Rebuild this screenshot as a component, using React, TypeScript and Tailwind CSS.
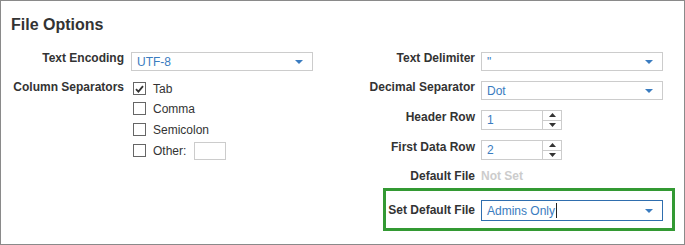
import React from "react";

const Caret = () => (
  <svg width="8" height="4" viewBox="0 0 8 4" className="absolute right-[9px] top-1/2 -translate-y-1/2">
    <path d="M0 0 L8 0 L4 4 Z" fill="#3a7cc0" />
  </svg>
);

function Select({ value, focused = false, h = "h-[19px]", cursor = false }: { value: string; focused?: boolean; h?: string; cursor?: boolean }) {
  return (
    <div
      className={`relative w-[182px] ${h} border ${focused ? "border-[#2f6eae]" : "border-[#cccccc]"} bg-white flex items-center pl-[5px] text-[12px] text-[#3a7cc0]`}
    >
      <span className="leading-[14px]">{value}</span>
      {cursor && <span className="inline-block w-px h-[15px] bg-[#222] ml-[1px]" />}
      <Caret />
    </div>
  );
}

function Spinner({ value }: { value: string }) {
  return (
    <div className="flex w-[81px] h-[20px] border border-[#cccccc] bg-white">
      <div className="flex-1 flex items-center pl-[5px] text-[12px] text-[#3a7cc0] leading-[14px]">{value}</div>
      <div className="w-[19px] border-l border-[#cccccc] flex flex-col">
        <div className="flex-1 flex items-center justify-center border-b border-[#cccccc]">
          <svg width="7" height="4" viewBox="0 0 7 4">
            <path d="M0 4 L7 4 L3.5 0 Z" fill="#333" />
          </svg>
        </div>
        <div className="flex-1 flex items-center justify-center">
          <svg width="7" height="4" viewBox="0 0 7 4">
            <path d="M0 0 L7 0 L3.5 4 Z" fill="#333" />
          </svg>
        </div>
      </div>
    </div>
  );
}

function Check({ checked, label, extra }: { checked?: boolean; label: string; extra?: React.ReactNode }) {
  return (
    <div className="flex items-center h-[13px]">
      <div className="w-[13px] h-[13px] border border-[#666] bg-white flex items-center justify-center">
        {checked && (
          <svg width="9" height="8" viewBox="0 0 9 8">
            <path d="M1 4.2 L3.4 6.6 L8 1.2" stroke="#333" strokeWidth="1.8" fill="none" />
          </svg>
        )}
      </div>
      <span className="ml-[7px] text-[12px] leading-[14px] text-[#333]">{label}</span>
      {extra}
    </div>
  );
}

export default function App() {
  return (
    <div
      className="w-[685px] h-[245px] border border-[#8a8a8a] bg-white text-[#333]"
      style={{ fontFamily: '"Liberation Sans", Arial, sans-serif' }}
    >
      <div className="pl-[10px] pt-[14px] text-[16px] leading-[20px] font-bold text-[#333]">File Options</div>
      <div className="flex mt-[17px]">
        {/* Left column */}
        <div className="w-[341px] flex flex-col">
          <div className="flex">
            <div className="w-[123px] text-right text-[12px] leading-[14px] font-bold -mt-px">Text Encoding</div>
            <div className="ml-[7px]">
              <Select value="UTF-8" />
            </div>
          </div>
          <div className="flex mt-[11px]">
            <div className="w-[123px] text-right text-[12px] leading-[14px] font-bold -mt-[2px]">Column Separators</div>
            <div className="ml-[9px] flex flex-col">
              <Check checked label="Tab" />
              <div className="mt-[7px]">
                <Check label="Comma" />
              </div>
              <div className="mt-[8px]">
                <Check label="Semicolon" />
              </div>
              <div className="mt-[8px]">
                <Check
                  label="Other:"
                  extra={<div className="ml-[8px] w-[32px] h-[18px] border border-[#cccccc] bg-white shrink-0" />}
                />
              </div>
            </div>
          </div>
        </div>
        {/* Right column */}
        <div className="flex flex-col">
          <div className="flex">
            <div className="w-[133px] text-right text-[12px] leading-[14px] font-bold -mt-px">Text Delimiter</div>
            <div className="ml-[6px]">
              <Select value={'"'} />
            </div>
          </div>
          <div className="flex mt-[10px]">
            <div className="w-[133px] text-right text-[12px] leading-[14px] font-bold -mt-px">Decimal Separator</div>
            <div className="ml-[6px]">
              <Select value="Dot" />
            </div>
          </div>
          <div className="flex mt-[10px]">
            <div className="w-[133px] text-right text-[12px] leading-[14px] font-bold">Header Row</div>
            <div className="ml-[6px]">
              <Spinner value="1" />
            </div>
          </div>
          <div className="flex mt-[10px]">
            <div className="w-[133px] text-right text-[12px] leading-[14px] font-bold">First Data Row</div>
            <div className="ml-[6px]">
              <Spinner value="2" />
            </div>
          </div>
          <div className="flex mt-[9px]">
            <div className="w-[133px] text-right text-[12px] leading-[14px] font-bold">Default File</div>
            <div className="ml-[6px] text-[12px] leading-[14px] font-bold text-[#cccccc]">Not Set</div>
          </div>
          <div className="ml-[41px] mt-[5px] w-[292px] border-[3px] border-[#339933] flex pt-[9px] pb-[7px]">
            <div className="w-[89px] text-right text-[12px] leading-[14px] font-bold pt-[3px]">Set Default File</div>
            <div className="ml-[6px]">
              <Select value="Admins Only" focused h="h-[21px]" cursor />
            </div>
          </div>
        </div>
      </div>
    </div>
  );
}
